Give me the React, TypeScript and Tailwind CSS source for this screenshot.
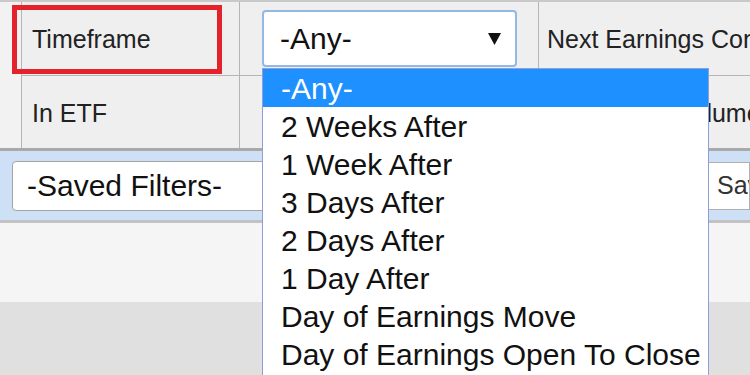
import React from "react";

const options = [
  "-Any-",
  "2 Weeks After",
  "1 Week After",
  "3 Days After",
  "2 Days After",
  "1 Day After",
  "Day of Earnings Move",
  "Day of Earnings Open To Close",
];

export default function App() {
  return (
    <div className="relative w-[750px] h-[375px] overflow-hidden bg-[#e0e0e0] font-['Liberation_Sans',Arial,sans-serif]">
      {/* filter table */}
      <div className="flex border-t-2 border-b-[3px] border-t-[#c9c9c9] border-b-[#a9a9a9] bg-[#efefef]">
        <div className="w-[22px] shrink-0 border-r border-[#b5b5b5] bg-[#f2f2f2]" />
        <div className="flex-1 flex flex-col">
          <div className="h-[74px] flex border-b border-[#b5b5b5]">
            <div className="w-[218px] shrink-0 border-r border-[#b5b5b5] flex items-center pl-[10px] pt-[3px] text-[25px] text-[#222]">
              Timeframe
            </div>
            <div className="w-[299px] shrink-0 border-r border-[#b5b5b5] pl-[22px] pt-[8px]">
              <div className="h-[57px] w-[255px] bg-white border-2 border-[#93b7e8] rounded-[4px] flex items-center justify-between pl-[16px] pr-[14px]">
                <span className="text-[30px] text-[#111] leading-none">-Any-</span>
                <svg width="13" height="12" viewBox="0 0 13 12">
                  <path d="M0 0 L13 0 L6.5 12 Z" fill="#111" />
                </svg>
              </div>
            </div>
            <div className="flex-1 flex items-center pl-[8px] pt-[3px] text-[25px] text-[#222] whitespace-nowrap overflow-hidden">
              Next Earnings Confirmed
            </div>
          </div>
          <div className="h-[72px] flex">
            <div className="w-[218px] shrink-0 border-r border-[#b5b5b5] flex items-center pl-[10px] pt-[3px] text-[25px] text-[#222]">
              In ETF
            </div>
            <div className="w-[299px] shrink-0 border-r border-[#b5b5b5]" />
            <div className="flex-1 flex items-center pl-[8px] pt-[3px] text-[25px] text-[#222] whitespace-nowrap overflow-hidden">
              Avg Option Volume
            </div>
          </div>
        </div>
      </div>

      {/* saved filters band */}
      <div className="h-[72px] flex items-center pl-[12px] bg-[#cde0f6] border-b-[3px] border-[#c2c2c2]">
        <div className="h-[50px] w-[300px] bg-white border border-[#a3a3a3] rounded-[4px] flex items-center pl-[14px] text-[30px] text-[#111]">
          -Saved Filters-
        </div>
        <div className="ml-auto h-[48px] w-[60px] bg-white border border-[#b0b0b0] flex items-center pl-[26px] text-[25px] text-[#333] whitespace-nowrap overflow-hidden">
          Save Filter
        </div>
      </div>

      <div className="h-[79px] bg-[#f5f5f5]" />

      {/* open dropdown list */}
      <div className="absolute left-[262px] top-[68px] w-[447px] h-[330px] bg-white border border-[#8e9fd6]">
        {options.map((o, i) => (
          <div
            key={o}
            className={
              i === 0
                ? "h-[38px] flex items-center pl-[18px] bg-[#1e90ff] text-white text-[30px] whitespace-nowrap"
                : "h-[38px] flex items-center pl-[18px] text-[#111] text-[30px] whitespace-nowrap"
            }
          >
            {o}
          </div>
        ))}
      </div>

      {/* red highlight annotation */}
      <div className="absolute left-[12px] top-[5px] w-[210px] h-[69px] border-[5px] border-[#e3222c]" />
    </div>
  );
}
